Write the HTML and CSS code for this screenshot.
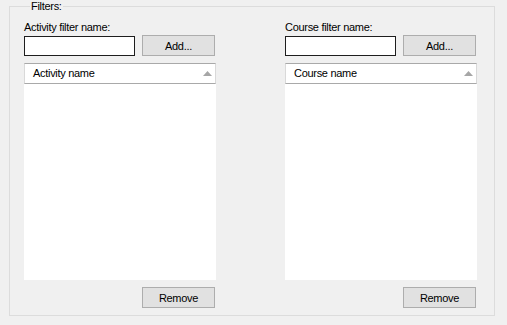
FILE: index.html
```html
<!DOCTYPE html>
<html>
<head>
<meta charset="utf-8">
<link rel="stylesheet" href="styles.css">
</head>
<body>
<fieldset class="filters">
  <legend class="filters-title">Filters:</legend>
  <div class="cols">
    <div class="col">
      <div class="field-label">Activity filter name:</div>
      <div class="add-row">
        <input class="textbox" type="text">
        <button class="btn">Add...</button>
      </div>
      <div class="listview">
        <div class="lv-header">
          <span class="lv-title">Activity name</span>
          <svg class="sort-arrow" width="9" height="5" viewBox="0 0 9 5"><polygon points="4.5,0 9,5 0,5" fill="#a6a6a6"/></svg>
        </div>
      </div>
      <button class="btn btn-remove">Remove</button>
    </div>
    <div class="col">
      <div class="field-label">Course filter name:</div>
      <div class="add-row">
        <input class="textbox" type="text">
        <button class="btn">Add...</button>
      </div>
      <div class="listview">
        <div class="lv-header">
          <span class="lv-title">Course name</span>
          <svg class="sort-arrow" width="9" height="5" viewBox="0 0 9 5"><polygon points="4.5,0 9,5 0,5" fill="#a6a6a6"/></svg>
        </div>
      </div>
      <button class="btn btn-remove">Remove</button>
    </div>
  </div>
</fieldset>
</body>
</html>
```
FILE: styles.css
```css
html, body {
  margin: 0;
  background: #f0f0f0;
}
body {
  font-family: "Liberation Sans", Arial, sans-serif;
  font-size: 11px;
  letter-spacing: -0.3px;
  color: #000;
  width: 507px;
  height: 325px;
  overflow: hidden;
}
.filters {
  box-sizing: border-box;
  margin: 0 0 0 9px;
  width: 486px;
  height: 316px;
  padding: 0 17px 0 14px;
  border: 1px solid #dcdcdc;
  min-width: 0;
}
.filters-title {
  margin-left: 6px;
  padding: 0 1px;
  line-height: 13px;
  font-size: 11px;
}
.cols {
  display: grid;
  grid-template-columns: 192px 192px;
  column-gap: 69px;
}
.col {
  display: flex;
  flex-direction: column;
}
.field-label {
  margin-top: 8px;
  line-height: 13px;
  height: 13px;
}
.add-row {
  margin-top: 1px;
  display: flex;
  align-items: flex-start;
  gap: 7px;
}
.textbox {
  box-sizing: border-box;
  width: 111px;
  height: 20px;
  margin: 1px 0 0 0;
  padding: 0 3px;
  border: 1px solid #1e1e1e;
  background: #fff;
  font: inherit;
  outline: none;
}
.btn {
  box-sizing: border-box;
  width: 73px;
  height: 21px;
  margin: 0;
  padding: 0;
  border: 1px solid #adadad;
  background: #e1e1e1;
  font: inherit;
  letter-spacing: inherit;
  color: #000;
}
.listview {
  margin-top: 7px;
  height: 217px;
  background: #fff;
}
.lv-header {
  box-sizing: border-box;
  height: 21px;
  display: flex;
  align-items: center;
  justify-content: space-between;
  padding: 0 3px 0 8px;
  border-top: 1px solid #a9a9a9;
  border-bottom: 1px solid #a9a9a9;
  border-left: 1px solid #d9d9d9;
  border-right: 1px solid #d9d9d9;
}
.lv-title {
  line-height: 13px;
}
.sort-arrow {
  display: block;
  margin-top: -1px;
}
.btn-remove {
  margin-top: 7px;
  align-self: flex-end;
  margin-right: 1px;
}
```
